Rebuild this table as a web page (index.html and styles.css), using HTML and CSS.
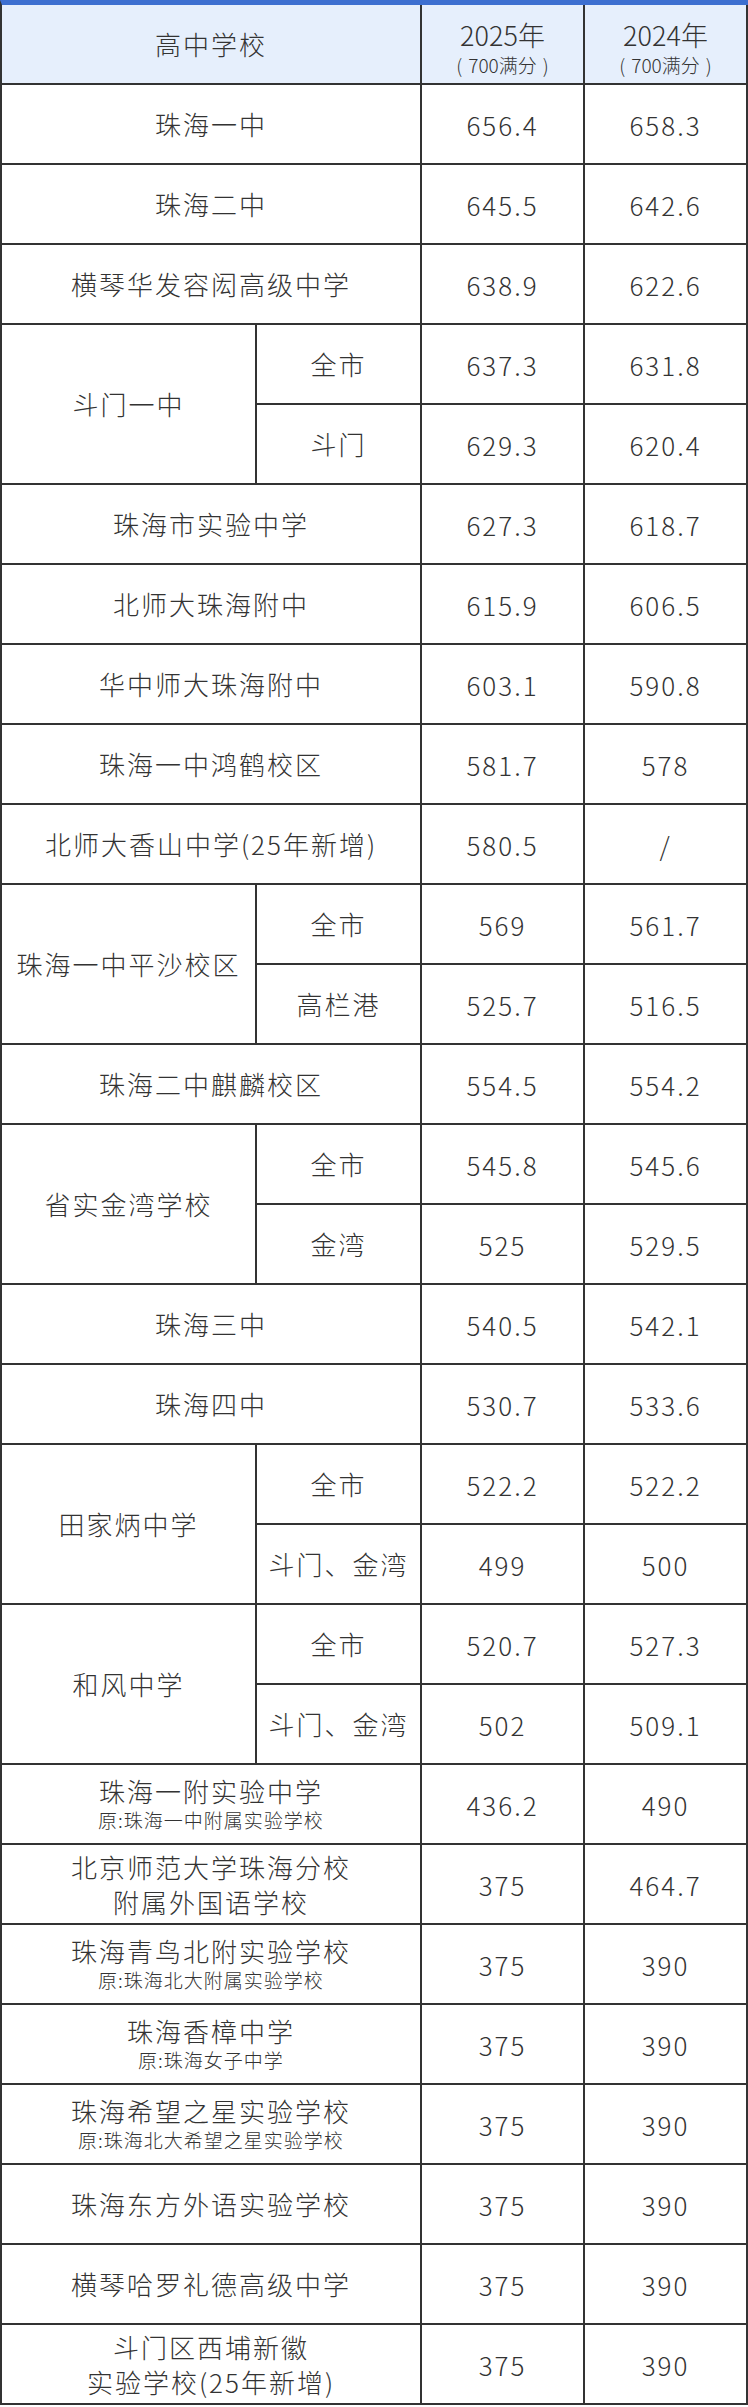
FILE: index.html
```html
<!DOCTYPE html>
<html lang="zh-CN">
<head>
<meta charset="utf-8">
<title>珠海高中录取分数线</title>
<link rel="stylesheet" href="styles.css">
</head>
<body>
<div class="table">
  <div class="cell head span2"><span class="name">高中学校</span></div>
  <div class="cell head"><div class="stack head-stack"><span class="year">2025年</span><span class="full"><span class="paren">(</span>700满分<span class="paren">)</span></span></div></div>
  <div class="cell head"><div class="stack head-stack"><span class="year">2024年</span><span class="full"><span class="paren">(</span>700满分<span class="paren">)</span></span></div></div>

  <div class="cell span2"><span class="name">珠海一中</span></div>
  <div class="cell num">656.4</div><div class="cell num">658.3</div>

  <div class="cell span2"><span class="name">珠海二中</span></div>
  <div class="cell num">645.5</div><div class="cell num">642.6</div>

  <div class="cell span2"><span class="name">横琴华发容闳高级中学</span></div>
  <div class="cell num">638.9</div><div class="cell num">622.6</div>

  <div class="cell rows2"><span class="name">斗门一中</span></div>
  <div class="cell"><span class="name">全市</span></div><div class="cell num">637.3</div><div class="cell num">631.8</div>
  <div class="cell"><span class="name">斗门</span></div><div class="cell num">629.3</div><div class="cell num">620.4</div>

  <div class="cell span2"><span class="name">珠海市实验中学</span></div>
  <div class="cell num">627.3</div><div class="cell num">618.7</div>

  <div class="cell span2"><span class="name">北师大珠海附中</span></div>
  <div class="cell num">615.9</div><div class="cell num">606.5</div>

  <div class="cell span2"><span class="name">华中师大珠海附中</span></div>
  <div class="cell num">603.1</div><div class="cell num">590.8</div>

  <div class="cell span2"><span class="name">珠海一中鸿鹤校区</span></div>
  <div class="cell num">581.7</div><div class="cell num">578</div>

  <div class="cell span2"><span class="name">北师大香山中学(25年新增)</span></div>
  <div class="cell num">580.5</div><div class="cell num">/</div>

  <div class="cell rows2"><span class="name">珠海一中平沙校区</span></div>
  <div class="cell"><span class="name">全市</span></div><div class="cell num">569</div><div class="cell num">561.7</div>
  <div class="cell"><span class="name">高栏港</span></div><div class="cell num">525.7</div><div class="cell num">516.5</div>

  <div class="cell span2"><span class="name">珠海二中麒麟校区</span></div>
  <div class="cell num">554.5</div><div class="cell num">554.2</div>

  <div class="cell rows2"><span class="name">省实金湾学校</span></div>
  <div class="cell"><span class="name">全市</span></div><div class="cell num">545.8</div><div class="cell num">545.6</div>
  <div class="cell"><span class="name">金湾</span></div><div class="cell num">525</div><div class="cell num">529.5</div>

  <div class="cell span2"><span class="name">珠海三中</span></div>
  <div class="cell num">540.5</div><div class="cell num">542.1</div>

  <div class="cell span2"><span class="name">珠海四中</span></div>
  <div class="cell num">530.7</div><div class="cell num">533.6</div>

  <div class="cell rows2"><span class="name">田家炳中学</span></div>
  <div class="cell"><span class="name">全市</span></div><div class="cell num">522.2</div><div class="cell num">522.2</div>
  <div class="cell"><span class="name">斗门、金湾</span></div><div class="cell num">499</div><div class="cell num">500</div>

  <div class="cell rows2"><span class="name">和风中学</span></div>
  <div class="cell"><span class="name">全市</span></div><div class="cell num">520.7</div><div class="cell num">527.3</div>
  <div class="cell"><span class="name">斗门、金湾</span></div><div class="cell num">502</div><div class="cell num">509.1</div>

  <div class="cell span2"><div class="stack"><span class="name">珠海一附实验中学</span><span class="note">原:珠海一中附属实验学校</span></div></div>
  <div class="cell num">436.2</div><div class="cell num">490</div>

  <div class="cell span2"><div class="stack"><span class="name line">北京师范大学珠海分校</span><span class="name line">附属外国语学校</span></div></div>
  <div class="cell num">375</div><div class="cell num">464.7</div>

  <div class="cell span2"><div class="stack"><span class="name">珠海青鸟北附实验学校</span><span class="note">原:珠海北大附属实验学校</span></div></div>
  <div class="cell num">375</div><div class="cell num">390</div>

  <div class="cell span2"><div class="stack"><span class="name">珠海香樟中学</span><span class="note">原:珠海女子中学</span></div></div>
  <div class="cell num">375</div><div class="cell num">390</div>

  <div class="cell span2"><div class="stack"><span class="name">珠海希望之星实验学校</span><span class="note">原:珠海北大希望之星实验学校</span></div></div>
  <div class="cell num">375</div><div class="cell num">390</div>

  <div class="cell span2"><span class="name">珠海东方外语实验学校</span></div>
  <div class="cell num">375</div><div class="cell num">390</div>

  <div class="cell span2"><span class="name">横琴哈罗礼德高级中学</span></div>
  <div class="cell num">375</div><div class="cell num">390</div>

  <div class="cell span2"><div class="stack"><span class="name line">斗门区西埔新徽</span><span class="name line">实验学校(25年新增)</span></div></div>
  <div class="cell num">375</div><div class="cell num">390</div>
</div>
</body>
</html>
```

FILE: styles.css
```css
html, body {
  margin: 0;
  padding: 0;
  background: #ffffff;
}

body {
  font-family: "Noto Sans CJK SC", "Noto Sans", sans-serif;
  color: #333333;
}

.table {
  width: 748px;
  box-sizing: border-box;
  display: grid;
  grid-template-columns: 255px 165px 163px 1fr;
  grid-auto-rows: 80px;
  border-top: 5px solid #3d6fd0;
  border-left: 2px solid #333333;
}

.cell {
  display: flex;
  align-items: center;
  justify-content: center;
  border-right: 2px solid #333333;
  border-bottom: 2px solid #333333;
  text-align: center;
  overflow: hidden;
}

.head {
  background: #e6effc;
}

.span2 {
  grid-column: span 2;
}

.rows2 {
  grid-row: span 2;
}

.stack {
  display: flex;
  flex-direction: column;
  align-items: center;
}

.head-stack {
  padding-top: 8px;
  gap: 2px;
}

.name {
  font-size: 26px;
  font-weight: 300;
  letter-spacing: 2px;
  line-height: 32px;
  white-space: nowrap;
}

.name.line {
  line-height: 35px;
}

.note {
  font-size: 19px;
  font-weight: 300;
  letter-spacing: 1px;
  line-height: 26px;
  white-space: nowrap;
}

.year {
  font-size: 27px;
  font-weight: 300;
  line-height: 32px;
}

.full {
  font-size: 19px;
  font-weight: 300;
  line-height: 24px;
  white-space: nowrap;
}

.paren {
  margin: 0 6px;
}

.num {
  font-size: 26px;
  font-weight: 300;
  letter-spacing: 2px;
}
```
